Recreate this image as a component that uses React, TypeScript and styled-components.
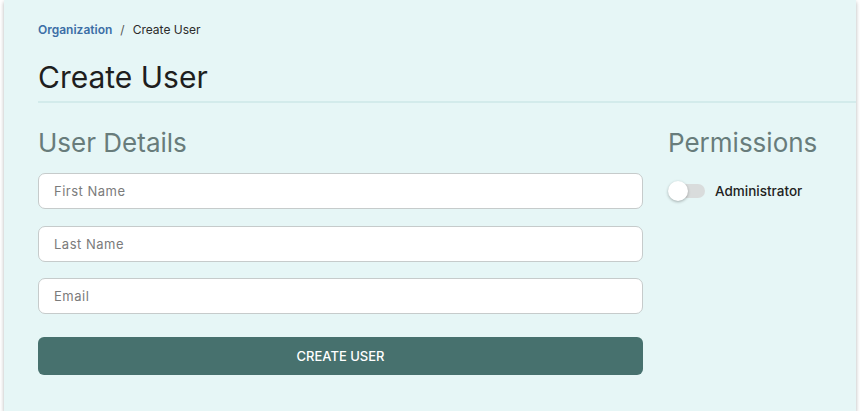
import React, { useState } from "react";
import styled, { createGlobalStyle } from "styled-components";

const GlobalStyle = createGlobalStyle`
  html, body {
    margin: 0;
    padding: 0;
    background: #ffffff;
    font-family: Inter, "Liberation Sans", sans-serif;
  }
`;

const Card = styled.div`
  box-sizing: border-box;
  width: 852px;
  height: 411px;
  margin: 0 4px;
  padding: 20px 0 36px 34px;
  background: #e6f6f6;
  box-shadow: 0 2px 4px rgba(0, 0, 0, 0.3);
`;

const Breadcrumb = styled.nav`
  display: flex;
  align-items: center;
  gap: 8px;
  height: 18px;
  font-size: 12px;
  color: #2b2b2b;
`;

const Crumb = styled.span<{ link?: boolean }>`
  font-weight: ${(p) => (p.link ? 600 : 400)};
  color: ${(p) => (p.link ? "#3c6ea6" : "#2b2b2b")};
`;

const Sep = styled.span`
  color: #555;
`;

const Header = styled.div`
  margin-top: 21px;
  padding-bottom: 6px;
  border-bottom: 2px solid #d3ebeb;
`;

const Title = styled.h1`
  margin: 0;
  font-size: 30px;
  line-height: 36px;
  font-weight: 400;
  color: #1e1e1e;
`;

const Body = styled.div`
  display: grid;
  grid-template-columns: 605px 1fr;
  column-gap: 25px;
  margin-top: 24px;
`;

const Column = styled.div`
  display: flex;
  flex-direction: column;
`;

const SectionTitle = styled.h2`
  margin: 0 0 14px;
  font-size: 26px;
  line-height: 32px;
  font-weight: 400;
  color: #687c7b;
`;

const Fields = styled.div`
  display: flex;
  flex-direction: column;
  gap: 16.5px;
`;

const Input = styled.input`
  box-sizing: border-box;
  width: 100%;
  height: 36px;
  padding: 0 15px;
  border: 1px solid #c6cbcb;
  border-radius: 7px;
  background: #ffffff;
  font-family: inherit;
  font-size: 13px;
  letter-spacing: 0.5px;
  color: #222;
  outline: none;
  &::placeholder {
    color: #7b7b7b;
  }
`;

const Button = styled.button`
  margin-top: 23px;
  height: 38px;
  border: none;
  border-radius: 6px;
  background: #47716e;
  color: #ffffff;
  font-family: inherit;
  font-size: 13px;
  font-weight: 500;
  text-transform: uppercase;
  cursor: pointer;
`;

const ToggleRow = styled.label`
  display: flex;
  align-items: center;
  gap: 10px;
  height: 36px;
  cursor: pointer;
`;

const Track = styled.span<{ on: boolean }>`
  position: relative;
  display: inline-block;
  width: 34px;
  height: 14px;
  margin-left: 3px;
  border-radius: 7px;
  background: ${(p) => (p.on ? "#9db8b6" : "#d9dcdc")};
`;

const Knob = styled.span<{ on: boolean }>`
  position: absolute;
  top: -3px;
  left: ${(p) => (p.on ? "14px" : "-3px")};
  width: 20px;
  height: 20px;
  border-radius: 50%;
  background: ${(p) => (p.on ? "#47716e" : "#ffffff")};
  box-shadow: 0 1px 3px rgba(0, 0, 0, 0.3);
  transition: left 0.15s ease;
`;

const ToggleLabel = styled.span`
  font-size: 13.5px;
  font-weight: 500;
  color: #222;
`;

const App: React.FC = () => {
  const [admin, setAdmin] = useState<boolean>(false);
  return (
    <>
      <GlobalStyle />
      <Card>
        <Breadcrumb>
          <Crumb link>Organization</Crumb>
          <Sep>/</Sep>
          <Crumb>Create User</Crumb>
        </Breadcrumb>
        <Header>
          <Title>Create User</Title>
        </Header>
        <Body>
          <Column>
            <SectionTitle>User Details</SectionTitle>
            <Fields>
              <Input placeholder="First Name" />
              <Input placeholder="Last Name" />
              <Input placeholder="Email" />
            </Fields>
            <Button>Create User</Button>
          </Column>
          <Column>
            <SectionTitle>Permissions</SectionTitle>
            <ToggleRow onClick={() => setAdmin(!admin)}>
              <Track on={admin}>
                <Knob on={admin} />
              </Track>
              <ToggleLabel>Administrator</ToggleLabel>
            </ToggleRow>
          </Column>
        </Body>
      </Card>
    </>
  );
};

export default App;
